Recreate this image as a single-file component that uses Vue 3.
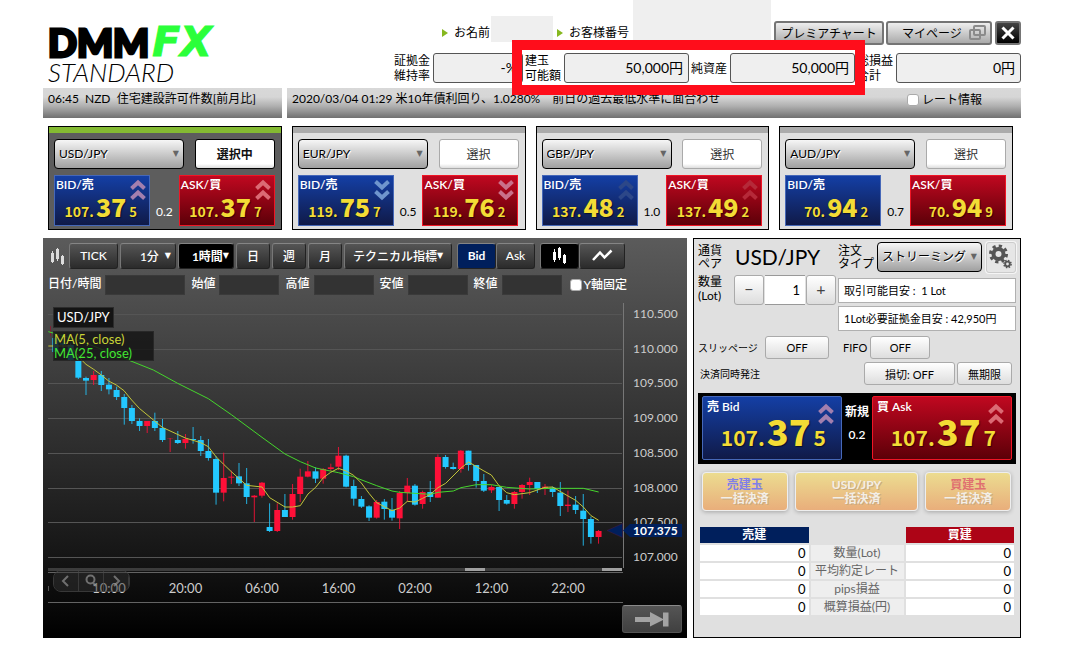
<script setup>
import { ref } from 'vue'

const pairs = [
  { name: 'USD/JPY', active: true, bid: ['107.', '37', '5'], ask: ['107.', '37', '7'], spread: '0.2', move: 'up' },
  { name: 'EUR/JPY', active: false, bid: ['119.', '75', '7'], ask: ['119.', '76', '2'], spread: '0.5', move: 'down' },
  { name: 'GBP/JPY', active: false, bid: ['137.', '48', '2'], ask: ['137.', '49', '2'], spread: '1.0', move: 'faint' },
  { name: 'AUD/JPY', active: false, bid: ['70.', '94', '2'], ask: ['70.', '94', '9'], spread: '0.7', move: '' },
]

const accounts = [
  { id: 'ratio', lines: ['証拠金', '維持率'], value: '-%', small: true },
  { id: 'capacity', lines: ['建玉', '可能額'], value: '50,000円' },
  { id: 'net', lines: ['純資産'], value: '50,000円' },
  { id: 'total', lines: ['総損益', '合計'], value: '0円' },
]

const quotes = [
  { id: 'date', label: '日付/時間', wide: true },
  { id: 'open', label: '始値' },
  { id: 'high', label: '高値' },
  { id: 'low', label: '安値' },
  { id: 'close', label: '終値' },
]

const summary = ['数量(Lot)', '平均約定レート', 'pips損益', '概算損益(円)']

const lots = ref('1')

// Each candle: wick top, body top, body bottom, wick bottom (3 steps per unit), 1 = rising
const candleData = [
  [-66, -66, -24, -24, 0], [-60, -50, -46, -30, 0], [-50, -45, 0, 2, 0],
  [-10, 3, 53, 57, 0], [50, 54, 62, 105, 0], [33, 45, 60, 75, 1], [33, 45, 75, 93, 0],
  [54, 74, 88, 103, 0], [80, 90, 111, 120, 0], [102, 111, 144, 194, 0], [135, 144, 183, 192, 0],
  [175, 183, 198, 213, 0], [183, 183, 198, 219, 1], [158, 183, 204, 213, 0], [177, 204, 240, 246, 0],
  [234, 234, 234, 276, 1], [213, 240, 249, 252, 0], [222, 237, 249, 266, 1], [201, 237, 240, 251, 0],
  [228, 240, 273, 288, 0], [237, 273, 294, 302, 0], [288, 297, 398, 434, 0], [278, 354, 398, 424, 1],
  [332, 350, 353, 372, 1], [309, 349, 370, 378, 0], [324, 370, 411, 432, 0], [405, 407, 412, 486, 1],
  [366, 368, 407, 413, 1], [430, 501, 513, 516, 0], [430, 450, 513, 516, 1], [402, 450, 471, 471, 0],
  [372, 402, 471, 479, 1], [326, 350, 402, 426, 1], [303, 334, 350, 352, 1], [322, 334, 356, 369, 0],
  [324, 327, 356, 371, 1], [311, 322, 327, 333, 1], [261, 287, 320, 330, 1], [284, 287, 380, 382, 0],
  [359, 378, 416, 437, 0], [408, 417, 440, 444, 0], [436, 439, 473, 483, 0], [420, 426, 473, 476, 1],
  [417, 425, 447, 479, 0], [414, 449, 473, 482, 0], [393, 399, 475, 507, 1], [354, 377, 399, 425, 1],
  [372, 377, 434, 437, 0], [392, 396, 432, 446, 1], [363, 396, 411, 426, 0], [283, 291, 413, 413, 1],
  [285, 291, 321, 326, 0], [308, 321, 327, 329, 0], [270, 272, 327, 338, 1], [272, 272, 315, 332, 0],
  [315, 315, 363, 383, 0], [342, 363, 392, 396, 0], [375, 381, 391, 399, 1], [381, 381, 420, 453, 0],
  [405, 420, 431, 434, 0], [393, 396, 432, 446, 1], [372, 375, 396, 416, 1], [353, 366, 375, 405, 1],
  [366, 366, 387, 399, 0], [372, 380, 384, 405, 1], [380, 383, 396, 411, 0], [366, 398, 438, 468, 0],
  [392, 434, 438, 456, 1], [408, 434, 450, 462, 0], [402, 452, 477, 557, 0], [470, 477, 531, 551, 0],
  [510, 513, 531, 551, 1],
]
const toY = (v) => 64 + v / 3
const candles = candleData.map(([wt, bt, bb, wb, up], i) => ({
  x: 12.4 + i * 7.65,
  y1: toY(wt),
  y2: toY(wb),
  top: toY(bt),
  h: Math.max((bb - bt) / 3, 0.3),
  color: up ? '#ff1038' : '#23c8ff',
}))

const line = (pts) => pts.map(([x, y]) => `${x / 3 - 3},${toY(y)}`).join(' ')
const maFast = line([
  [25, -42], [92, -42], [125, 0], [138, 13], [161, 28], [184, 45], [206, 63], [229, 75], [252, 92],
  [275, 120], [298, 145], [344, 183], [367, 202], [436, 234], [482, 248], [505, 260], [528, 290],
  [551, 313], [574, 335], [620, 376], [666, 381], [689, 413], [735, 441], [758, 441], [781, 437],
  [804, 402], [827, 382], [850, 353], [872, 337], [895, 325], [918, 333], [941, 346], [964, 369],
  [987, 400], [1010, 428], [1033, 440], [1056, 452], [1079, 444], [1102, 424], [1125, 426],
  [1148, 415], [1171, 403], [1194, 383], [1217, 370], [1263, 324], [1286, 306], [1332, 333],
  [1354, 345], [1377, 377], [1400, 398], [1423, 404], [1469, 398], [1515, 382], [1538, 381],
  [1584, 408], [1607, 421], [1630, 441], [1653, 467], [1676, 481],
])
const maSlow = line([
  [25, -85], [92, -66], [140, -50], [265, 0], [340, 30], [413, 70], [505, 116], [574, 164],
  [666, 232], [735, 282], [781, 305], [827, 324], [895, 338], [941, 350], [960, 358], [1010, 377],
  [1056, 393], [1079, 397], [1125, 400], [1171, 403], [1194, 397], [1240, 393], [1263, 383],
  [1309, 374], [1354, 374], [1400, 382], [1469, 387], [1538, 385], [1630, 385], [1676, 396],
])
const levels = ['110.500', '110.000', '109.500', '109.000', '108.500', '108.000', '107.500', '107.000']
  .map((text, i) => ({ text, y: Math.round(18 + i * 34.7) }))
const times = ['10:00', '20:00', '06:00', '16:00', '02:00', '12:00', '22:00']
  .map((text, i) => ({ text, x: 66 + i * 76.5 }))
</script>

<template>
  <main class="page">
    <header class="header">
      <h1 class="logo">
        <span class="brand"><span class="dmm">DMM</span><span class="fx">FX</span></span>
        <span class="standard">STANDARD</span>
      </h1>
      <div class="account">
        <div class="top-row">
          <span class="who"><i class="tri"></i>お名前</span>
          <span class="blank name-blank"></span>
          <span class="who"><i class="tri"></i>お客様番号</span>
          <span class="blank number-blank"></span>
          <button class="head-btn chart-btn">プレミアチャート</button>
          <button class="head-btn my-btn">
            マイページ
            <svg width="17" height="15" viewBox="0 0 17 15" fill="none" stroke="#8b8b8b" stroke-width="2">
              <rect x="5" y="1" width="11" height="9" rx="1" /><rect x="1" y="5" width="10" height="9" rx="1" />
            </svg>
          </button>
          <button class="head-btn close-btn" aria-label="閉じる">
            <svg width="14" height="14" viewBox="0 0 14 14" stroke="#fff" stroke-width="3"><path d="M1.5 1.5 12.5 12.5M12.5 1.5 1.5 12.5" /></svg>
          </button>
        </div>
        <div class="balance-row">
          <template v-for="a in accounts" :key="a.id">
            <label class="bal-label" :for="a.id"><span v-for="l in a.lines" :key="l">{{ l }}</span></label>
            <input :id="a.id" class="bal-box" :class="{ small: a.small }" :value="a.value" readonly />
          </template>
        </div>
        <div class="marker"></div>
      </div>
    </header>

    <div class="news">
      <p class="news-bar">06:45&nbsp; NZD&nbsp; 住宅建設許可件数[前月比]</p>
      <div class="news-bar">
        <span>2020/03/04 01:29 米10年債利回り、1.0280%　前日の過去最低水準に面合わせ</span>
        <label class="rate-info"><input type="checkbox" class="check" />レート情報</label>
      </div>
    </div>

    <section class="cards">
      <article v-for="p in pairs" :key="p.name" class="card" :class="{ active: p.active }">
        <div class="card-row">
          <span class="drop">
            <select :aria-label="p.name"><option>{{ p.name }}</option></select><i class="caret">▼</i>
          </span>
          <button class="pick">{{ p.active ? '選択中' : '選択' }}</button>
        </div>
        <div class="card-row prices">
          <button class="price bid">
            <span class="side">BID/売</span>
            <svg v-if="p.move" class="chev" :class="p.move" viewBox="0 0 16 22" fill="none" stroke-width="4"><path d="M1.5 9.5 8 3.5 14.5 9.5M1.5 19.5 8 13.5 14.5 19.5" /></svg>
            <span class="digits"><span>{{ p.bid[0] }}</span><b>{{ p.bid[1] }}</b><small>{{ p.bid[2] }}</small></span>
          </button>
          <span class="spread">{{ p.spread }}</span>
          <button class="price ask">
            <span class="side">ASK/買</span>
            <svg v-if="p.move" class="chev" :class="p.move" viewBox="0 0 16 22" fill="none" stroke-width="4"><path d="M1.5 9.5 8 3.5 14.5 9.5M1.5 19.5 8 13.5 14.5 19.5" /></svg>
            <span class="digits"><span>{{ p.ask[0] }}</span><b>{{ p.ask[1] }}</b><small>{{ p.ask[2] }}</small></span>
          </button>
        </div>
      </article>
    </section>

    <div class="work">
      <section class="chart">
        <div class="tools">
          <svg class="tool-icon" width="14" height="17" viewBox="0 0 14 17" fill="#ddd"><path d="M0 5h3v9H0zM1 3h1v12H1zM5 1h3v10H5zM6 0h1v13H6zM10 8h3v8h-3zM11 7h1v10h-1z" /></svg>
          <button class="tool w48">TICK</button>
          <button class="tool w55 right">1分 <i>▼</i></button>
          <button class="tool w55 right on">1時間<i>▼</i></button>
          <button class="tool w34">日</button>
          <button class="tool w34">週</button>
          <button class="tool w34">月</button>
          <button class="tool w110">テクニカル指標<i>▼</i></button>
          <span class="group">
            <button class="tool w39 navy">Bid</button><button class="tool w39">Ask</button>
          </span>
          <span class="group">
            <button class="tool w39 on" aria-label="ローソク足"><svg width="14" height="17" viewBox="0 0 14 17" fill="#fff"><path d="M0 5h3v8H0zM1 2h1v13H1zM5 1h3v10H5zM6 0h1v13H6zM10 8h3v8h-3zM11 7h1v10h-1z" /></svg></button><button class="tool w45" aria-label="ライン"><svg width="22" height="14" viewBox="0 0 22 14" fill="none" stroke="#fff" stroke-width="2.5"><path d="M2 12 9 4.5 13.5 9.5 20.5 2.5" /></svg></button>
          </span>
        </div>
        <div class="values">
          <template v-for="q in quotes" :key="q.id">
            <label :for="q.id">{{ q.label }}</label>
            <input :id="q.id" :class="{ wide: q.wide }" readonly />
          </template>
          <label class="fix"><input type="checkbox" class="check" />Y軸固定</label>
        </div>
        <div class="plot">
          <svg class="canvas" viewBox="0 0 644 342">
            <g stroke="#555" stroke-width="1">
              <line v-for="l in levels" :key="l.text" x1="5" x2="579" :y1="l.y + 0.5" :y2="l.y + 0.5" />
            </g>
            <path d="M580.5 7v265" stroke="#777" />
            <path d="M5 272h574v3H5z" fill="#3c3c3c" />
            <path d="M422 272h20v3h-20zM559 272h20v3h-20z" fill="#a0a0a0" />
            <path d="M5 276.5h575M5 306.5h575" stroke="#636363" />
            <path d="M5.5 290v5" stroke="#555" />
            <path d="M7.5 30v10" stroke="#7b2134" />
            <g v-for="(c, i) in candles" :key="i">
              <line :x1="c.x" :x2="c.x" :y1="c.y1" :y2="c.y2" :stroke="c.color" stroke-width="1" stroke-opacity="0.85" />
              <rect :x="c.x - 3" width="6" :y="c.top" :height="c.h" :fill="c.color" />
            </g>
            <polyline :points="maSlow" fill="none" stroke="#45d62c" stroke-width="1" />
            <polyline :points="maFast" fill="none" stroke="#c3c63a" stroke-width="1" />
            <g class="axis">
              <text v-for="l in levels" :key="l.text" class="level" x="590" :y="l.y + 4">{{ l.text }}</text>
              <text v-for="t in times" :key="t.text" :x="t.x" y="297" text-anchor="middle">{{ t.text }}</text>
            </g>
            <path d="M564 234.5 579.5 227.5V241.5z" fill="#001f5c" stroke="#4a1b45" stroke-width="0.5" />
            <path d="M580 234.5 587 228H639V241H587z" fill="#001f5c" />
            <text class="now" x="590" y="239">107.375</text>
          </svg>
          <div class="symbol">USD/JPY</div>
          <div class="legend"><span class="fast">MA(5, close)</span><span class="slow">MA(25, close)</span></div>
          <div class="nav">
            <button aria-label="前へ"><svg width="12" height="14" viewBox="0 0 12 14" fill="none" stroke="#888" stroke-width="2"><path d="M8 2 3 7 8 12" /></svg></button>
            <button aria-label="拡大"><svg width="14" height="14" viewBox="0 0 14 14" fill="none" stroke="#888" stroke-width="2"><circle cx="6.5" cy="5.5" r="4" /><path d="M9 9 12 12" /></svg></button>
            <button aria-label="次へ"><svg width="12" height="14" viewBox="0 0 12 14" fill="none" stroke="#888" stroke-width="2"><path d="M4 2 9 7 4 12" /></svg></button>
          </div>
          <button class="jump" aria-label="最新へ"><svg width="34" height="15" viewBox="0 0 34 15" fill="#a3a3a3"><path d="M0 5H15V0L28 7 28 .5H33.5V14.5H28V8L15 14.5V10H0z" /></svg></button>
        </div>
      </section>

      <section class="order">
        <div class="row pair-row">
          <span class="two">通貨<br />ペア</span>
          <strong class="pair">USD/JPY</strong>
          <label class="two" for="type">注文<br />タイプ</label>
          <span class="drop type"><select id="type"><option>ストリーミング</option></select><i class="caret">▼</i></span>
          <button class="gear" aria-label="設定">
            <svg width="24" height="26" viewBox="0 0 24 26" fill="none" stroke="#555">
              <circle cx="9.5" cy="10" r="5" stroke-width="4" />
              <circle cx="9.5" cy="10" r="8" stroke-width="3" stroke-dasharray="3.2 3.08" />
              <circle cx="18.5" cy="20" r="2.3" stroke-width="1.8" />
              <circle cx="18.5" cy="20" r="3.6" stroke-width="1.5" stroke-dasharray="1.5 1.33" />
            </svg>
          </button>
        </div>
        <div class="row lot-row">
          <label class="two lot" for="lots">数量<br />(Lot)</label>
          <span class="stepper">
            <button class="soft" aria-label="減らす">−</button>
            <input id="lots" v-model="lots" />
            <button class="soft" aria-label="増やす">+</button>
          </span>
          <div class="notes">
            <p>取引可能目安 :&nbsp; 1 Lot</p>
            <p>1Lot必要証拠金目安 : 42,950円</p>
          </div>
        </div>
        <div class="row opt-row">
          <span class="slip">スリッページ</span><button class="soft b64">OFF</button>
          <span class="fifo">FIFO</span><button class="soft b60">OFF</button>
        </div>
        <div class="row opt-row second">
          <span class="settle">決済同時発注</span>
          <button class="soft b91">損切: OFF</button><button class="soft b55">無期限</button>
        </div>
        <div class="deal">
          <button class="price big bid">
            <span class="side">売 Bid</span>
            <svg class="chev up" viewBox="0 0 16 22" fill="none" stroke-width="4"><path d="M1.5 9.5 8 3.5 14.5 9.5M1.5 19.5 8 13.5 14.5 19.5" /></svg>
            <span class="digits"><span>107.</span><b>37</b><small>5</small></span>
          </button>
          <div class="mid"><span>新規</span><span>0.2</span></div>
          <button class="price big ask">
            <span class="side">買 Ask</span>
            <svg class="chev up" viewBox="0 0 16 22" fill="none" stroke-width="4"><path d="M1.5 9.5 8 3.5 14.5 9.5M1.5 19.5 8 13.5 14.5 19.5" /></svg>
            <span class="digits"><span>107.</span><b>37</b><small>7</small></span>
          </button>
        </div>
        <div class="bulk">
          <button><span class="sell">売建玉</span>一括決済</button>
          <button><span>USD/JPY</span>一括決済</button>
          <button><span class="buy">買建玉</span>一括決済</button>
        </div>
        <table class="sum">
          <thead><tr><th class="h-sell">売建</th><td></td><th class="h-buy">買建</th></tr></thead>
          <tbody>
            <tr v-for="s in summary" :key="s"><td>0</td><th>{{ s }}</th><td>0</td></tr>
          </tbody>
        </table>
      </section>
    </div>
  </main>
</template>

<style>
body { background: #fff; }
</style>

<style scoped>
* { box-sizing: border-box; }
.page { padding: 0 44px 22px 43px; font-family: Lato, "Noto Sans CJK JP", sans-serif; font-size: 12px; color: #000; }
button, input, select { font-family: inherit; font-size: inherit; color: inherit; margin: 0; padding: 0; border-radius: 3px; }
button { white-space: nowrap; }
i { font-style: normal; }
p, h1 { margin: 0; }
svg { flex: none; }

.header { display: flex; justify-content: space-between; height: 88px; }
.logo { padding: 23px 0 0 5px; font-weight: 400; display: flex; flex-direction: column; }
.brand { display: flex; align-items: center; line-height: 38px; height: 37px; }
.dmm { font-size: 38px; font-weight: 900; -webkit-text-stroke: 3px #000; }
.fx { font: italic 700 41px/38px "DejaVu Sans", sans-serif; color: #2bff3a; -webkit-text-stroke: 1px #2bff3a; margin-left: 3px; }
.standard { font-size: 26px; line-height: 26px; font-weight: 300; font-style: italic; margin-top: -1px; }

.account { position: relative; display: flex; flex-direction: column; align-items: flex-end; gap: 8px; }
.top-row { display: flex; align-items: flex-end; height: 45px; }
.who { display: flex; align-items: center; gap: 6px; line-height: 24px; }
.tri { border-left: 6px solid #86b81f; border-top: 4px solid transparent; border-bottom: 4px solid transparent; }
.blank { background: #efefef; }
.name-blank { width: 62px; height: 26px; margin: 0 4px 3px 1px; }
.number-blank { width: 138px; height: 40px; margin: 0 3px 0 4px; align-self: flex-start; }
.head-btn { height: 24px; border: 2px solid #757575; border-radius: 3px; background: linear-gradient(#eee, #aaa); display: flex; align-items: center; justify-content: center; padding-bottom: 1px; }
.chart-btn { width: 110px; margin-right: 2px; }
.my-btn { width: 106px; margin-right: 3px; gap: 7px; padding-left: 10px; }
.close-btn { width: 26px; background: linear-gradient(#444, #000); }
.balance-row { display: flex; align-items: center; height: 30px; }
.bal-label { display: flex; flex-direction: column; line-height: 15px; width: 36px; margin: 0 3px 0 2px; }
.bal-box { width: 125px; height: 30px; border: 1px solid #555; background: #efefef; text-align: right; padding: 0 5px 2px 0; font-size: 14px; }
.bal-box.small { width: 90px; }
.marker { position: absolute; right: 156px; top: 40px; width: 353px; height: 55px; border: 10px solid #ff0d1b; pointer-events: none; }

.news { display: grid; grid-template-columns: minmax(0, 239fr) minmax(0, 734fr); gap: 5px; }
.news-bar { height: 30px; padding: 0 39px 0 5px; line-height: 22px; background: linear-gradient(#d8d8d8, #d6d6d6 30%, #b0b0b0 60%, #707070); display: flex; justify-content: space-between; white-space: nowrap; }
.check { appearance: none; width: 12px; height: 12px; border: 1px solid #aaa; border-radius: 3px; background: #fff; flex: none; }
.rate-info { display: flex; align-items: center; height: 24px; gap: 3px; }

.cards { display: grid; grid-template-columns: repeat(4, 1fr); gap: 10px; padding: 8px 8px 0 5px; }
.card { height: 104px; border: 1px solid #000; border-top: 0; background: #e0e0e0; box-shadow: inset 0 1px #000, inset 0 7px #ababab; padding: 13px 6px 0 5px; }
.card.active { background: #5d5d5d; box-shadow: inset 0 1px #000, inset 0 7px #84ba32; }
.card-row { display: flex; justify-content: space-between; }
.prices { margin-top: 6px; }
.drop { position: relative; display: flex; width: 130px; height: 30px; }
.drop select { appearance: none; width: 100%; border: 1px solid #000; border-radius: 4px; padding: 0 0 2px 4px; background: linear-gradient(#f6f6f6, #a0a0a0); text-shadow: 1px 1px #fff; }
.caret { position: absolute; right: 5px; top: 8px; font-size: 8px; line-height: 14px; color: #666; pointer-events: none; font-family: "DejaVu Sans", sans-serif; }
.pick { width: 80px; height: 30px; border: 1px solid #aaa; background: linear-gradient(#fff 85%, #ddd); color: #333; padding-bottom: 2px; }
.active .pick { border-color: #000; font-weight: 700; color: #111; }
.spread { align-self: flex-end; line-height: 28px; }
.active .spread { color: #fff; }
.price { position: relative; width: 96px; height: 51px; border: 1px solid #4668b8; border-radius: 0; background: linear-gradient(#143fa5, #101a48); color: #fff; text-align: left; }
.price.ask { border-color: #f01525; background: linear-gradient(#c00820, #5c0008); }
.side { position: absolute; left: 1px; top: 0; font-size: 12px; line-height: 17px; font-weight: 600; }
.chev { position: absolute; right: 3px; top: 3px; width: 16px; height: 22px; stroke: #a27fae; }
.ask .chev { stroke: #db6a74; }
.chev.down { transform: rotate(180deg); stroke: #6f95cd; }
.ask .chev.down { stroke: #c9708a; }
.chev.faint { stroke: #2c4788; }
.ask .chev.faint { stroke: #b52939; }
.digits { position: absolute; right: 12px; bottom: -1px; display: flex; align-items: baseline; font-family: "Noto Sans CJK JP", sans-serif; font-size: 14px; line-height: 28px; color: #f3dc35; font-weight: 700; text-shadow: 1px 1px 1px #0008; }
.digits b { font-size: 25px; margin-left: 2px; }
.digits small { font-size: 13px; margin-left: 3px; }

.work { display: grid; grid-template-columns: minmax(0, 644fr) minmax(0, 328fr); gap: 6px; margin-top: 8px; }
.chart { background: linear-gradient(#5b5b5b, #3c3c3c 35%, #171717 78%, #000); padding-top: 5px; color: #fff; }
.tools { display: flex; align-items: center; gap: 2px; padding-left: 8px; height: 26px; }
.tool-icon { margin-right: 2px; }
.group { display: flex; margin-left: 3px; }
.tool { height: 26px; border: 1px solid #222; border-top-color: #858585; border-left-color: #777; background: linear-gradient(#555, #2b2b2b); color: #fff; display: flex; align-items: center; justify-content: center; font-size: 12px; font-weight: 500; padding-bottom: 2px; }
.tool i { font-size: 8px; font-family: "DejaVu Sans", sans-serif; }
.tool.right { justify-content: flex-end; padding-right: 4px; gap: 6px; }
.tool.on { background: #000; font-weight: 700; gap: 0; }
.tool.navy { background: #001f5c; font-weight: 700; }
.w34 { width: 34px; } .w39 { width: 39px; } .w45 { width: 46px; } .w48 { width: 49px; } .w55 { width: 56px; } .w110 { width: 108px; }
.values { display: flex; align-items: center; margin-top: 6px; height: 20px; padding-left: 5px; font-weight: 500; }
.values label { line-height: 18px; padding-bottom: 2px; }
.values input:not(.check) { width: 60px; height: 20px; border: 1px solid #3a3a3a; border-radius: 0; background: #333; margin: 0 6px 0 4px; }
.values input.wide { width: 80px; }
.values .fix { display: flex; align-items: center; gap: 2px; padding: 0 0 0 2px; }
.plot { position: relative; margin-top: 1px; }
.canvas { display: block; width: 100%; }
.axis { font-size: 13px; fill: #ccc; }
.axis .level { font-size: 12px; }
.now { font-size: 12px; font-weight: 700; fill: #fff; }
.symbol { position: absolute; left: 10px; top: 11px; border: 1px solid #2c2c2c; background: #141414; padding: 0 3px; line-height: 19px; font-size: 13px; }
.legend { position: absolute; left: 10px; top: 35px; width: 101px; height: 30px; border: 1px solid #3338; background: #111c; display: flex; flex-direction: column; font-size: 13px; line-height: 14px; white-space: nowrap; }
.fast { color: #c9d437; }
.slow { color: #42e632; }
.nav { position: absolute; left: 10px; bottom: 46px; display: flex; border: 1px solid #444; border-radius: 8px; overflow: hidden; opacity: .8; }
.nav button { height: 20px; width: 25px; border: 0; border-right: 1px solid #444; border-radius: 0; background: #3339; display: flex; justify-content: center; align-items: center; }
.jump { position: absolute; right: 5px; bottom: 5px; width: 60px; height: 28px; border: 1px solid #555; border-top-color: #8a8a8a; background: linear-gradient(#555, #404040); display: flex; align-items: center; justify-content: center; }

.order { border: 1px solid #000; background: #e0e0e0; padding: 2px 4px 0; }
.row { display: flex; align-items: center; }
.pair-row { height: 32px; }
.two { line-height: 13px; width: 37px; }
.pair { font-size: 21px; font-weight: 400; flex: 1; line-height: 28px; }
.drop.type { width: 105px; margin: 0 4px 0 2px; }
.gear { width: 30px; height: 31px; border: 1px solid #ccc; background: #e6e6e6; box-shadow: 0 0 0 1px #f5f5f5; display: flex; align-items: center; justify-content: center; }
.lot-row { align-items: flex-start; margin-top: 2px; }
.two.lot { line-height: 14px; width: 36px; }
.stepper { display: flex; gap: 1px; flex: 1; }
.soft { border: 1px solid #aaa; background: linear-gradient(#fff, #ddd); height: 23px; font-size: 11px; }
.stepper .soft { width: 30px; height: 30px; font-size: 16px; color: #444; padding-bottom: 3px; }
.stepper input { width: 40px; height: 30px; border: 0; border-top: 1px solid #999; border-bottom: 1px solid #999; border-radius: 0; background: #fff; text-align: right; padding-right: 5px; font-size: 13px; }
.notes { display: flex; flex-direction: column; gap: 3px; width: 178px; margin-top: 3px; font-size: 11px; }
.notes p { height: 25px; line-height: 24px; border: 1px solid #b0b0b0; background: #fff; padding-left: 5px; }
.opt-row { margin-top: 5px; height: 23px; font-size: 11px; padding-right: 4px; }
.opt-row.second { margin-top: 3px; }
.slip { width: 67px; font-size: 10px; }
.fifo { margin: 0 3px 0 14px; }
.settle { flex: 1; padding-left: 2px; font-size: 10px; }
.b64 { width: 64px; } .b60 { width: 60px; } .b91 { width: 91px; margin-right: 2px; } .b55 { width: 55px; }
.deal { margin: 8px 0 0; background: #000; padding: 3px 4px; height: 71px; display: flex; justify-content: space-between; }
.price.big { width: 140px; height: 64px; border-radius: 2px; }
.big .side { left: 4px; top: 1px; }
.big .chev { right: 7px; top: 6px; }
.big .digits { right: 15px; bottom: 4px; font-size: 21px; line-height: 36px; }
.big .digits b { font-size: 36px; }
.big .digits small { font-size: 21px; }
.mid { color: #fff; display: flex; flex-direction: column; align-items: center; line-height: 23px; padding-top: 4px; font-weight: 600; }
.bulk { display: grid; grid-template-columns: 86fr 124fr 86fr; gap: 7px; padding: 8px 5px 0 4px; }
.bulk button { height: 39px; border: 1px solid #eee; border-radius: 4px; background: linear-gradient(#ecdc90, #e9ae7b); box-shadow: 0 1px 4px #0004; color: #f3eee6; font-weight: 700; line-height: 14px; text-shadow: 1px 1px #c9aa80; display: flex; flex-direction: column; align-items: center; justify-content: center; }
.bulk .sell { color: #7f7fe8; text-shadow: none; }
.bulk .buy { color: #e07070; text-shadow: none; }
.sum { width: 100%; margin: 14px 0 19px; border-spacing: 2px; table-layout: fixed; line-height: 16px; }
.sum th, .sum td { padding: 0 3px; height: 16px; font-weight: 400; text-align: right; background: #fff; white-space: nowrap; }
.sum th { background: #eee; color: #666; text-align: center; padding: 0; }
.sum thead td { background: none; width: 93px; }
.sum thead th { color: #fff; font-weight: 700; }
.sum .h-sell { background: #001f5c; }
.sum .h-buy { background: #ad0416; }
.sum td { font-size: 13px; }
</style>
